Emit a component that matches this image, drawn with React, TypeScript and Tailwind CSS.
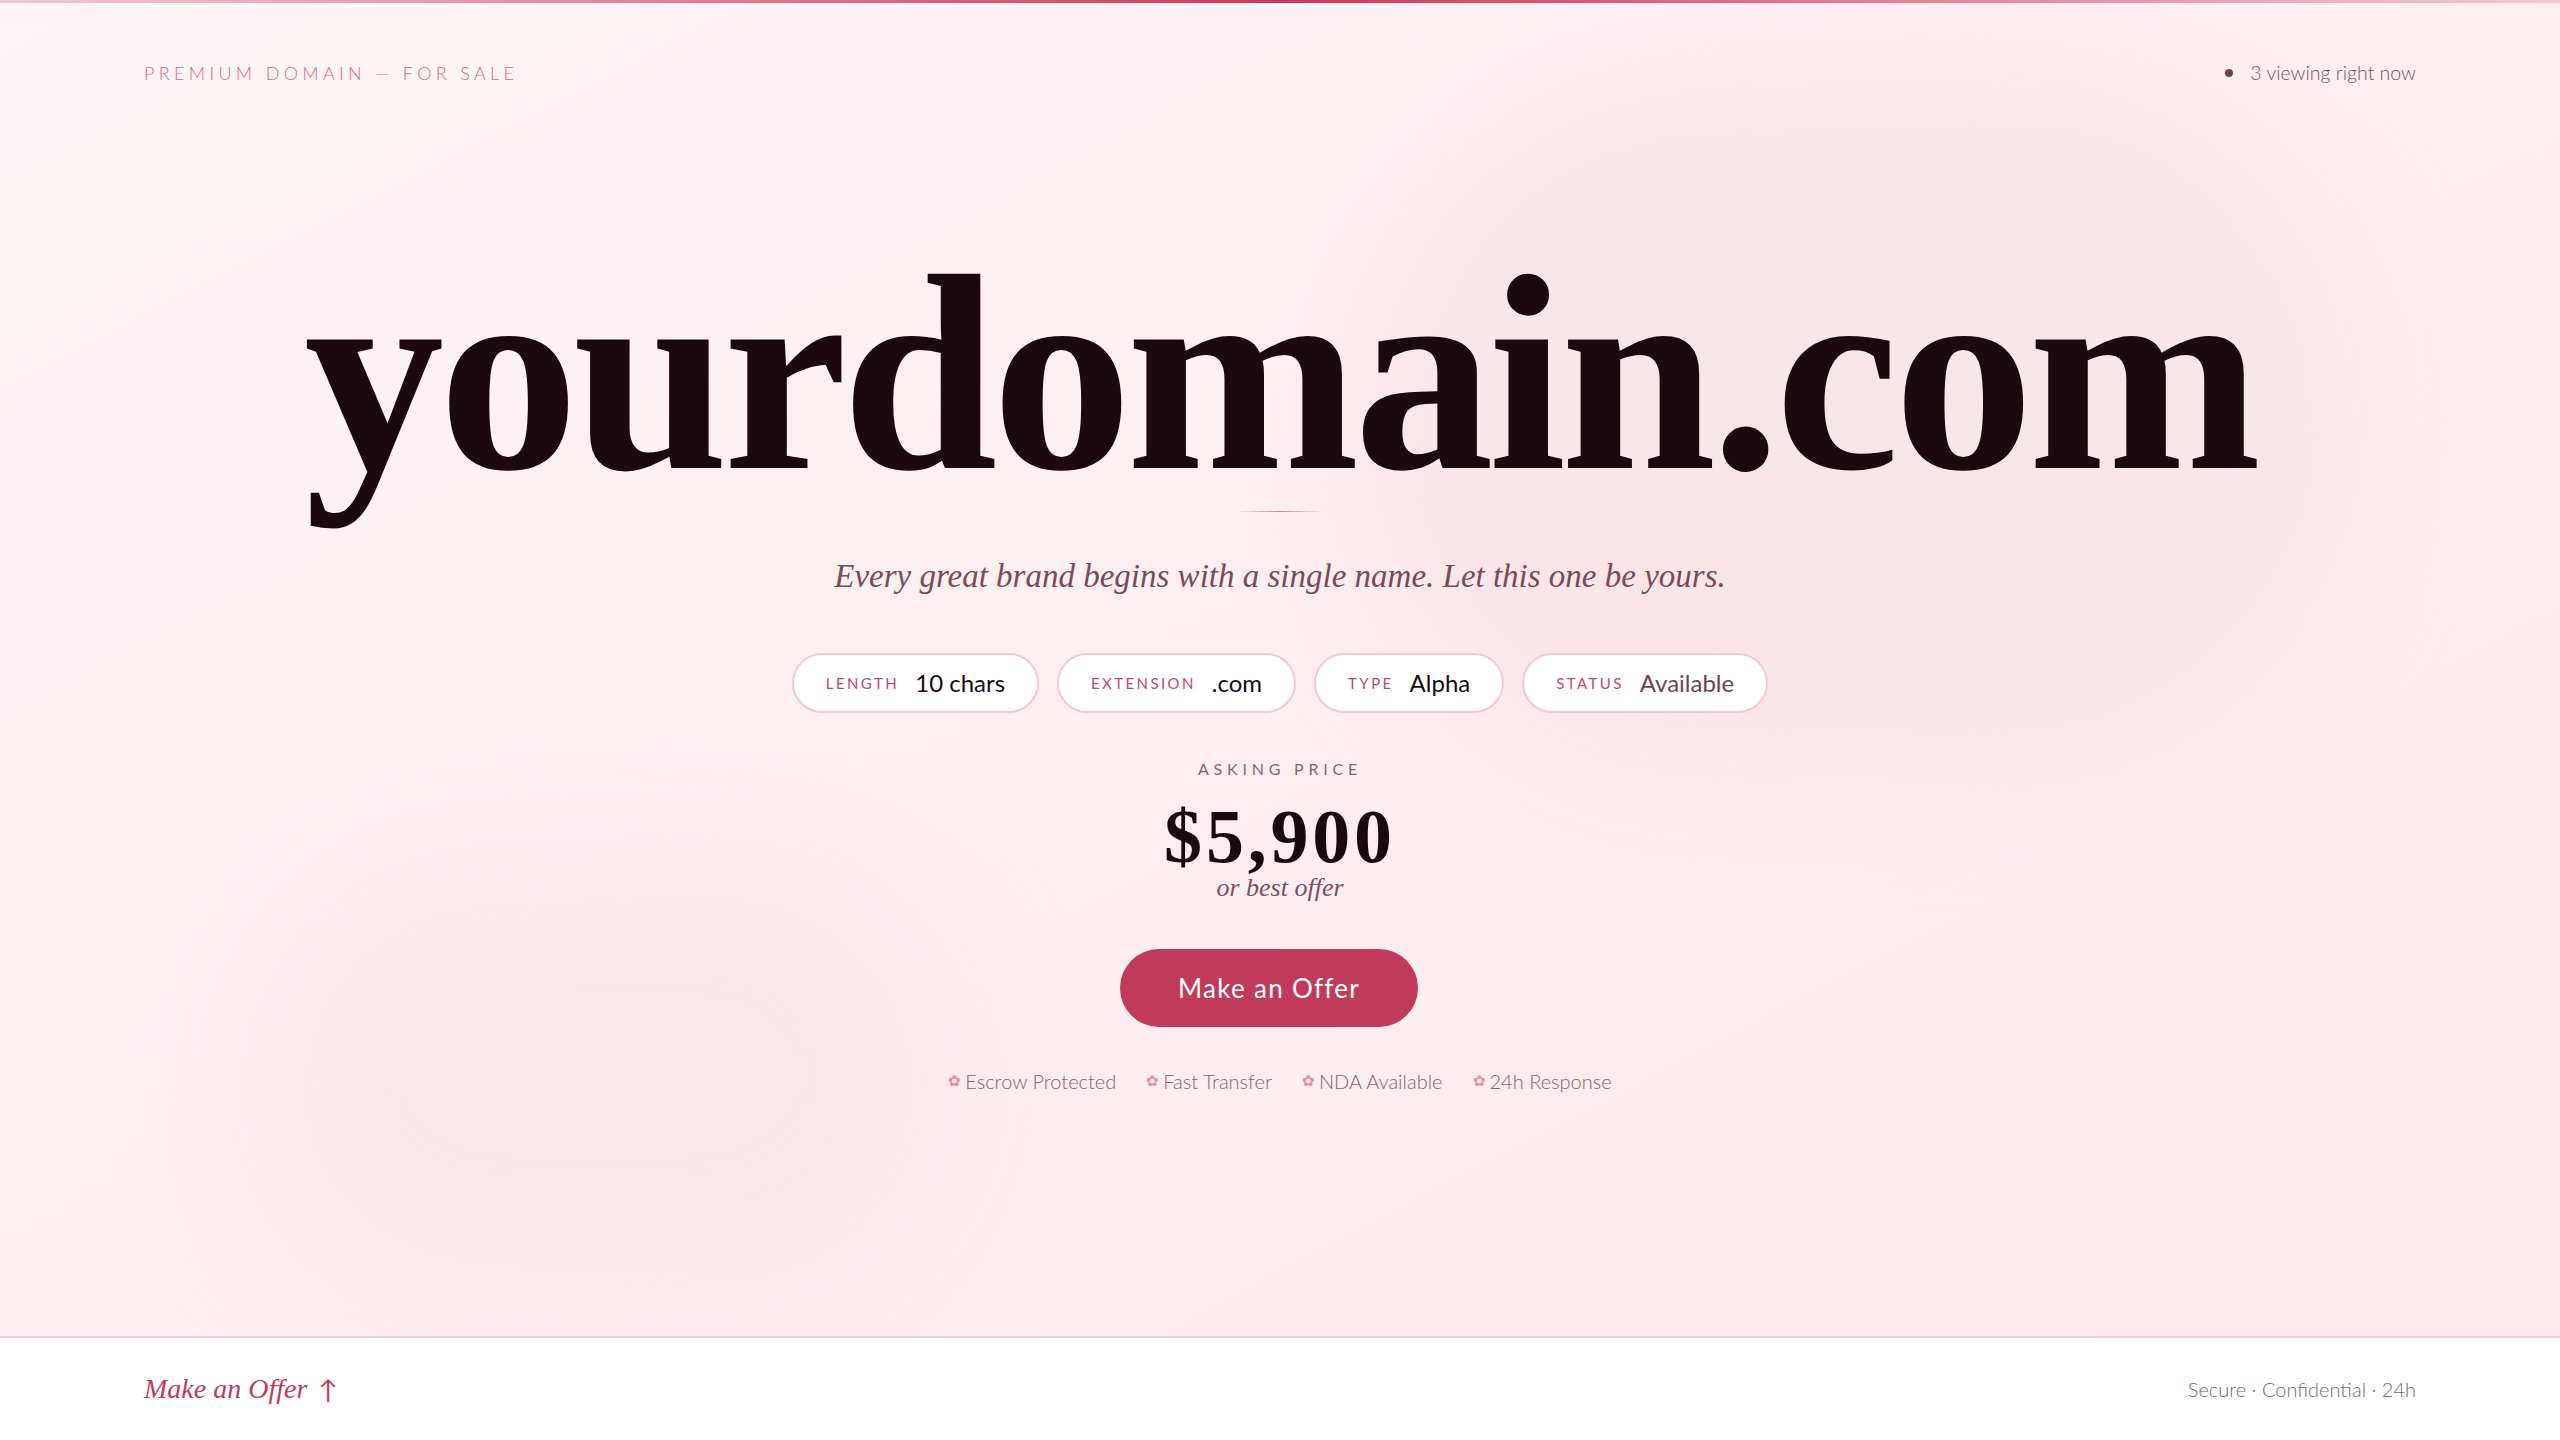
import React from 'react';

const specs = [
  { label: 'Length', value: '10 chars' },
  { label: 'Extension', value: '.com' },
  { label: 'Type', value: 'Alpha' },
  { label: 'Status', value: 'Available', muted: true },
];

const perks = ['Escrow Protected', 'Fast Transfer', 'NDA Available', '24h Response'];

const App: React.FC = () => {
  return (
    <div className="flex h-screen flex-col overflow-hidden font-['Lato',sans-serif]">
      <main className="relative flex flex-1 flex-col overflow-hidden bg-gradient-to-br from-[#fdf5f7] via-[#fceef1] to-[#fbe9ed]">
        {/* soft background glows */}
        <div className="pointer-events-none absolute left-[1350px] top-[60px] h-[700px] w-[1000px] rounded-full bg-[#f9dfe5]/60 blur-3xl" />
        <div className="pointer-events-none absolute left-[250px] top-[850px] h-[450px] w-[700px] rounded-full bg-[#f9e1e7]/50 blur-3xl" />

        <div className="relative flex flex-1 flex-col">
          <div className="h-[3px] bg-gradient-to-r from-[#f1c8d2] via-[#c8385a] to-[#f1c8d2]" />

          {/* Header */}
          <header className="flex items-center justify-between px-[144px] pt-[57px] leading-[26px]">
            <span className="text-[18px] font-light uppercase tracking-[0.24em] text-[#cf6a87]">
              Premium Domain — For Sale
            </span>
            <span className="flex items-center gap-[17px] text-[19.5px] font-light text-[#7a5060]">
              <span className="h-[8px] w-[8px] rounded-full bg-[#6b4450]" />
              3 viewing right now
            </span>
          </header>

          {/* Hero */}
          <section className="flex flex-col items-center">
            <h1 className="mt-[168px] font-['Liberation_Serif',serif] text-[280px] font-bold leading-[240px] tracking-[-0.02em] text-[#1c0910]">
              yourdomain.com
            </h1>
            <div className="mt-[17px] h-px w-[90px] bg-gradient-to-r from-transparent via-[#c4889a] to-transparent" />

            <p className="mt-[44px] font-['Liberation_Serif',serif] text-[33px] italic leading-[40px] text-[#7a4a5a]">
              Every great brand begins with a single name. Let this one be yours.
            </p>

            <div className="mt-[57px] flex gap-[18px]">
              {specs.map((s) => (
                <div
                  key={s.label}
                  className="flex h-[60px] items-center gap-[16px] rounded-full border-2 border-[#f2c8d2] bg-white px-[32px]"
                >
                  <span className="text-[15px] uppercase tracking-[0.16em] text-[#c4466a]">{s.label}</span>
                  <span className={`text-[24px] ${s.muted ? 'text-[#6b4450]' : 'text-[#1c0910]'}`}>{s.value}</span>
                </div>
              ))}
            </div>

            <span className="mt-[46px] text-[16px] uppercase leading-[20px] tracking-[0.3em] text-[#8a6472]">
              Asking Price
            </span>
            <span className="mt-[21px] font-['Liberation_Serif',serif] text-[76px] font-bold leading-[72px] tracking-[0.05em] text-[#1c0910]">
              $5,900
            </span>
            <span className="font-['Liberation_Serif',serif] text-[26px] italic leading-[32px] text-[#7a5060]">
              or best offer
            </span>

            <button className="mr-[22px] mt-[45px] h-[78px] rounded-full bg-[#c03a5c] px-[58px] text-[26px] font-normal tracking-[0.05em] text-white">
              Make an Offer
            </button>

            <div className="mt-[42px] flex gap-[30px] text-[20px] font-light leading-[24px] text-[#8a6070]">
              {perks.map((p) => (
                <span key={p} className="flex items-center gap-[4px]">
                  <span className="font-['DejaVu_Sans',sans-serif] text-[15px] text-[#d98fa5]">✿</span>
                  {p}
                </span>
              ))}
            </div>
          </section>
        </div>
      </main>

      {/* Footer */}
      <footer className="flex h-[104px] items-center justify-between border-t-2 border-[#f3c9d3] bg-white px-[144px]">
        <span className="flex items-center gap-[11px] font-['Liberation_Serif',serif] text-[28px] italic text-[#c03a5c]">
          Make an Offer
          <span className="font-['Lato',sans-serif] text-[26px] not-italic">↑</span>
        </span>
        <span className="text-[20px] font-light text-[#8a6070]">Secure · Confidential · 24h</span>
      </footer>
    </div>
  );
};

export default App;
